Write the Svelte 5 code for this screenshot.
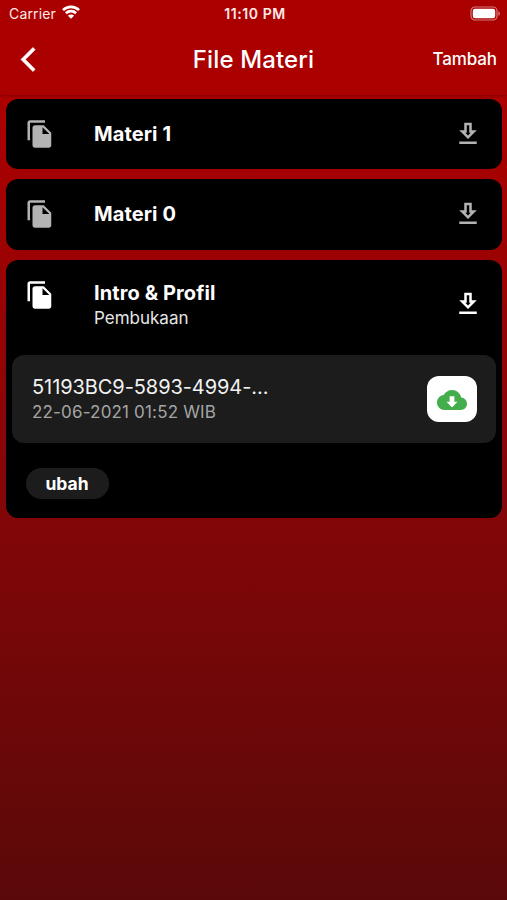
<script>
  const lessons = [
    { title: "Materi 1" },
    { title: "Materi 0" },
    {
      title: "Intro & Profil",
      subtitle: "Pembukaan",
      open: true,
      file: { name: "51193BC9-5893-4994-...", date: "22-06-2021 01:52 WIB" }
    }
  ];
</script>

<div class="screen">
  <header class="header">
    <div class="status">
      <div class="status__carrier">
        <span>Carrier</span>
        <svg class="status__wifi" viewBox="0 0 18 14">
          <path d="M1 5.1a11.4 11.4 0 0 1 16 0M3.9 8.3a7.3 7.3 0 0 1 10.2 0" />
          <path class="status__wifi-dot" d="M9 13.8 5.9 10.7a4.4 4.4 0 0 1 6.2 0z" />
        </svg>
      </div>
      <span class="status__time">11:10 PM</span>
      <svg class="status__battery" viewBox="0 0 31 15">
        <rect class="status__battery-frame" x="1" y="1" width="26" height="13" rx="4" />
        <rect x="2.8" y="2.8" width="22.4" height="9.4" rx="2.2" />
        <path class="status__battery-cap" d="M28.3 5.2c2.2 1 2.2 3.6 0 4.6z" />
      </svg>
    </div>
    <nav class="nav">
      <button class="nav__back" aria-label="Kembali">
        <svg viewBox="0 0 24 24">
          <path d="M11.67 3.87 9.9 2.1 0 12l9.9 9.9 1.77-1.77L3.54 12z" />
        </svg>
      </button>
      <h1 class="nav__title">File Materi</h1>
      <button class="nav__add">Tambah</button>
    </nav>
  </header>

  <main class="list">
    {#each lessons as { title, subtitle, open, file }}
      <section class="card" class:card_open={open}>
        <div class="card__head">
          <svg class="card__icon" viewBox="0 0 24 24">
            <path d="M16 1H4c-1.1 0-2 .9-2 2v14h2V3h12V1zm-1 4 6 6v10c0 1.1-.9 2-2 2H7.99C6.89 23 6 22.1 6 21V7c0-1.1.89-2 1.99-2H15zm-1 7h5.5L14 6.5V12z" />
          </svg>
          <div class="card__text">
            <h2 class="card__title">{title}</h2>
            {#if subtitle}
              <p class="card__subtitle">{subtitle}</p>
            {/if}
          </div>
          <svg class="card__icon card__icon_download" viewBox="0 0 24 24">
            <path d="M19 9h-4V3H9v6H5l7 7 7-7zm-8 2V5h2v6h1.17L12 13.17 9.83 11H11zm-6 7h14v2H5z" />
          </svg>
        </div>
        {#if file}
          <div class="file">
            <div class="file__text">
              <p class="file__name">{file.name}</p>
              <p class="file__date">{file.date}</p>
            </div>
            <button class="file__download" aria-label="Unduh">
              <svg viewBox="0 0 24 24">
                <path d="M19.35 10.04C18.67 6.59 15.64 4 12 4 9.11 4 6.6 5.64 5.35 8.04 2.34 8.36 0 10.91 0 14c0 3.31 2.69 6 6 6h13c2.76 0 5-2.24 5-5 0-2.64-2.05-4.78-4.65-4.96zM16.4 13.4l-4.05 4.1c-.2.2-.51.2-.71 0L7.6 13.4h2.5V8.9h3.8v4.5z" />
              </svg>
            </button>
          </div>
          <button class="edit">ubah</button>
        {/if}
      </section>
    {/each}
  </main>
</div>

<style>
  :global(body) {
    margin: 0;
  }

  .screen {
    box-sizing: border-box;
    height: 900px;
    font-family: Inter, Roboto, sans-serif;
    color: #fff;
    background: linear-gradient(#ad0000 90px, #820608 520px, #5a0909 900px);
  }

  button {
    border: 0;
    padding: 0;
    background: none;
    font: inherit;
    color: inherit;
  }

  svg {
    display: block;
    fill: currentColor;
  }

  h1,
  h2,
  p {
    margin: 0;
  }

  .header {
    height: 95px;
    background: #ab0000;
    box-shadow: 0 1px 3px rgba(0, 0, 0, 0.25);
  }

  .status {
    display: grid;
    grid-template-columns: 1fr auto 1fr;
    align-items: center;
    height: 27px;
    padding: 0 6px 0 9px;
    font-size: 14px;
    color: #ffe9e9;
  }

  .status__carrier {
    display: flex;
    align-items: center;
    gap: 6px;
    letter-spacing: 0.15px;
  }

  .status__wifi {
    width: 18px;
    height: 14px;
    margin-top: -3px;
    fill: none;
    stroke: #fff;
    stroke-width: 2.7;
  }

  .status__wifi-dot {
    fill: #fff;
    stroke: none;
  }

  .status__time {
    font-weight: 600;
    font-size: 14px;
    letter-spacing: 0.6px;
  }

  .status__battery {
    justify-self: end;
    width: 31px;
    height: 15px;
    margin-top: -1px;
    fill: #fff;
  }

  .status__battery-frame {
    fill: none;
    stroke: #d57a7a;
    stroke-width: 1.2;
  }

  .status__battery-cap {
    fill: #d57a7a;
  }

  .nav {
    display: grid;
    grid-template-columns: 1fr auto 1fr;
    align-items: center;
    height: 64px;
    padding: 0 10px 0 20px;
  }

  .nav__back svg {
    width: 29px;
    height: 29px;
    stroke: #fff;
    stroke-width: 0.6;
    overflow: visible;
  }

  .nav__back {
    justify-self: start;
    padding-left: 1px;
  }

  .nav__title {
    margin: 0 10px 0 0;
    font-size: 24px;
    font-weight: 500;
    letter-spacing: 0.15px;
  }

  .nav__add {
    justify-self: end;
    font-size: 17px;
    font-weight: 500;
    letter-spacing: -0.1px;
  }

  .list {
    display: flex;
    flex-direction: column;
    gap: 10px;
    padding: 3.5px 5px 0 6px;
  }

  .card {
    box-sizing: border-box;
    height: 70.7px;
    border-radius: 12px;
    background: #000;
  }

  .card_open {
    height: 258px;
  }

  .card__head {
    display: flex;
    align-items: center;
    box-sizing: border-box;
    height: 70px;
    padding: 0 19px;
  }

  .card_open .card__head {
    align-items: flex-start;
    height: 95px;
    padding-top: 20px;
  }

  .card__icon {
    flex: none;
    width: 30px;
    height: 30px;
    color: #b3b3b3;
  }

  .card_open .card__icon {
    color: #fff;
  }

  .card_open .card__icon_download {
    margin-top: 9px;
  }

  .card__text {
    flex: 1;
    padding-left: 39px;
  }

  .card__title {
    font-size: 20px;
    font-weight: 700;
    line-height: 26px;
    letter-spacing: 0.1px;
  }

  .card__subtitle {
    font-size: 17px;
    line-height: 24px;
    color: #e6e6e6;
  }

  .file {
    display: flex;
    align-items: center;
    justify-content: space-between;
    box-sizing: border-box;
    height: 88px;
    margin: 0 6px;
    padding: 0 19px 0 20px;
    border-radius: 12px;
    background: #1c1c1c;
  }

  .file__name {
    font-size: 20px;
    line-height: 26px;
    letter-spacing: -0.08px;
    color: #f2f2f2;
  }

  .file__date {
    font-size: 17px;
    line-height: 24px;
    letter-spacing: 0.17px;
    color: #a4a4a4;
  }

  .file__download {
    display: flex;
    align-items: center;
    justify-content: center;
    box-sizing: border-box;
    width: 50px;
    height: 46px;
    padding-top: 3px;
    border-radius: 12px;
    background: #fff;
    color: #43ae4b;
  }

  .file__download svg {
    width: 30px;
    height: 30px;
  }

  .edit {
    display: block;
    width: 83px;
    height: 31px;
    margin: 25px 0 0 19.5px;
    border-radius: 16px;
    background: #1c1c1c;
    font-size: 17.5px;
    font-weight: 700;
  }
</style>
